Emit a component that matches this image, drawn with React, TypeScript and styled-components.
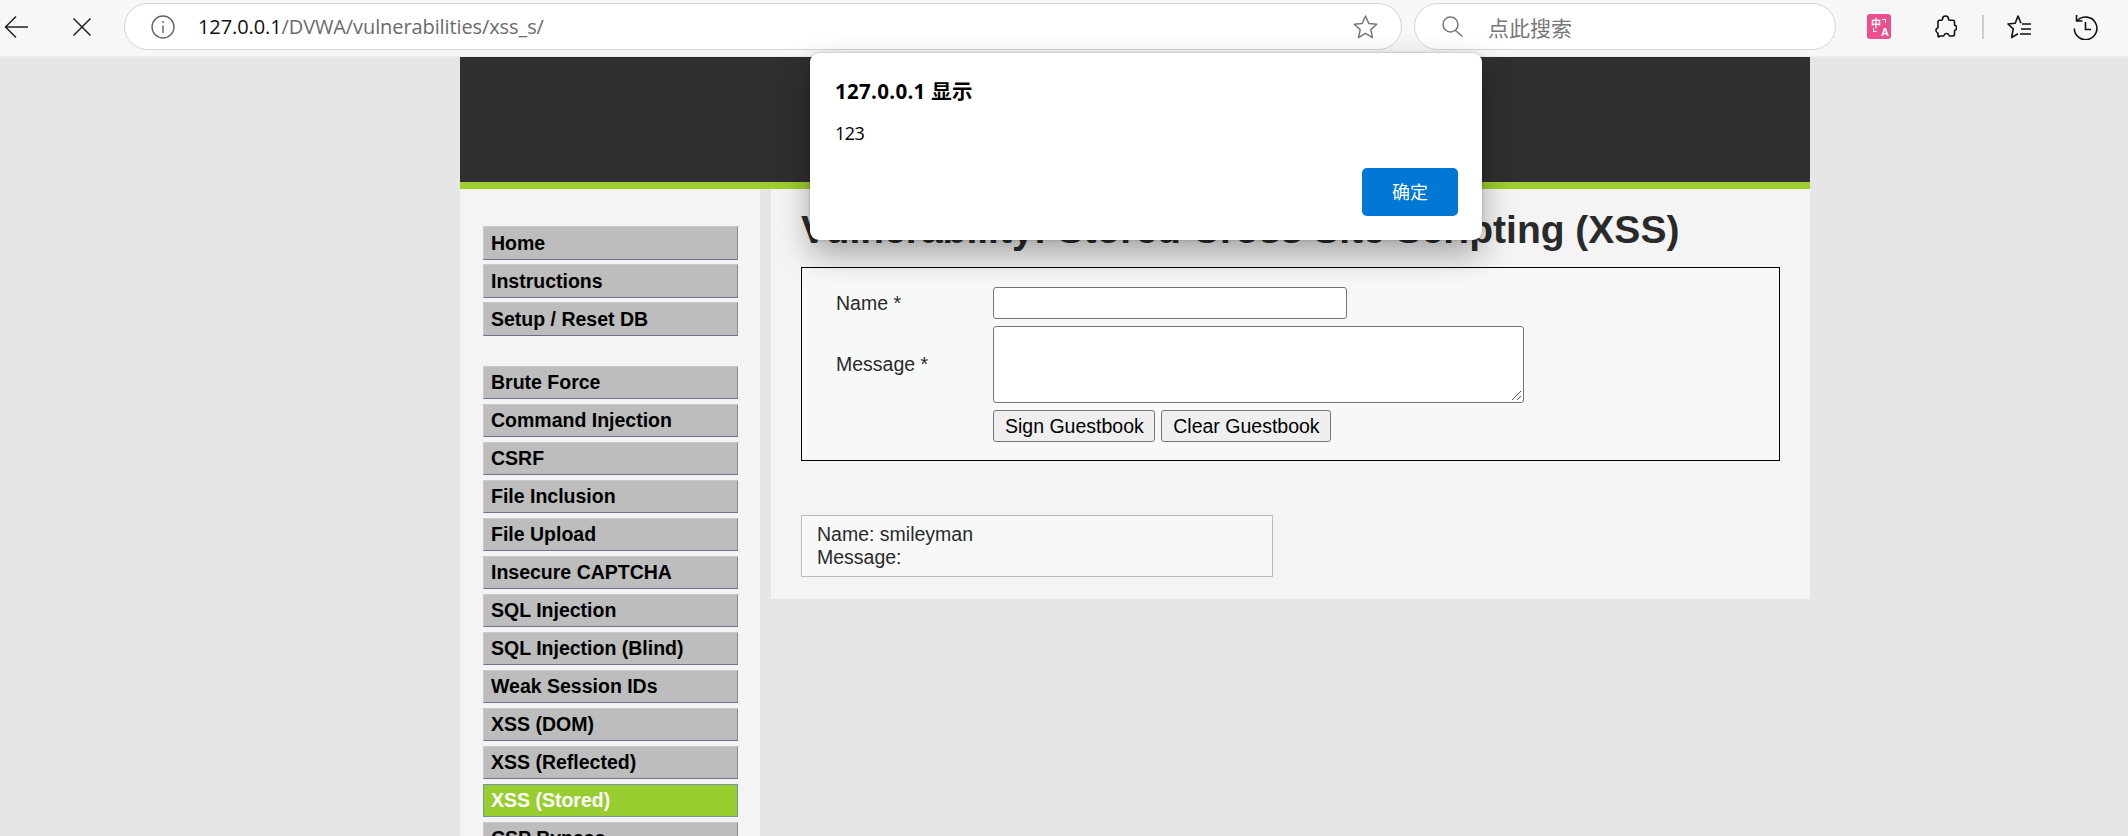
import React from "react";
import styled, { createGlobalStyle } from "styled-components";

const Global = createGlobalStyle`
    html, body {
        margin: 0;
        padding: 0;
        height: 836px;
        overflow: hidden;
        background: #e6e6e6;
        font-family: "Liberation Sans", Arial, sans-serif;
    }
`;

const Toolbar = styled.div`
    height: 57px;
    background: #f7f7f7;
    border-bottom: 1px solid #eeeeee;
    box-sizing: border-box;
    display: flex;
    align-items: center;
    padding: 0 0 3px 4px;
`;

const ToolIcon = styled.div<{ $ml?: number }>`
    margin-left: ${(p) => p.$ml || 0}px;
    display: flex;
    flex: none;
`;

const AddressBar = styled.div`
    margin-left: 33px;
    width: 1278px;
    height: 47px;
    box-sizing: border-box;
    background: #fff;
    border: 1.5px solid #d4d4d4;
    border-radius: 24px;
    display: flex;
    align-items: center;
    padding: 0 23px 0 26px;
    flex: none;
`;

const Url = styled.div`
    margin-left: 23px;
    flex: 1;
    font-size: 20px;
    font-family: "Open Sans", "Liberation Sans", sans-serif;
    letter-spacing: -0.1px;
    color: #6b6b6b;
    b {
        font-weight: 400;
        color: #111;
    }
`;

const SearchBar = styled.div`
    margin-left: 12px;
    width: 422px;
    height: 47px;
    box-sizing: border-box;
    background: #fff;
    border: 1.5px solid #d4d4d4;
    border-radius: 24px;
    display: flex;
    align-items: center;
    padding-left: 27px;
    flex: none;
    color: #777;
    font-size: 21px;
    font-family: "Noto Sans CJK SC", sans-serif;
`;

const SearchText = styled.span`
    margin-left: 24px;
`;

const ToolDivider = styled.div`
    width: 2px;
    height: 24px;
    background: #cfcfcf;
    flex: none;
`;

const TranslateBadge = styled.div`
    margin-left: 31px;
    flex: none;
    width: 24px;
    height: 25px;
    box-sizing: border-box;
    padding: 4px 3px 3px 4px;
    border-radius: 3px;
    background: #ec4f8b;
    color: #fff;
    display: grid;
    grid-template-columns: 10px 7px;
    grid-template-rows: 10px 8px;
    font-weight: 700;
`;

const BadgeHan = styled.span`
    font-size: 10px;
    line-height: 10px;
    font-family: "Noto Sans CJK SC", sans-serif;
`;

const BadgeLatin = styled.span`
    font-size: 11px;
    line-height: 9px;
    font-family: "Liberation Sans", sans-serif;
`;

const BadgeCorner = styled.span<{ $flip?: boolean }>`
    width: 4px;
    height: 4px;
    box-sizing: border-box;
    border: 1.5px solid #fff;
    ${(p) =>
        p.$flip
            ? "border-top: 0; border-right: 0; margin-left: 2px;"
            : "border-bottom: 0; border-left: 0; margin-left: 1px; margin-top: 1px;"}
`;

const Page = styled.div`
    width: 1350px;
    margin-left: 460px;
`;

const Header = styled.div`
    height: 132px;
    box-sizing: border-box;
    background: #2f2f2f;
    border-bottom: 7px solid #9fcd2f;
`;

const Body = styled.div`
    display: flex;
    align-items: flex-start;
`;

const Sidebar = styled.div`
    width: 300px;
    height: 660px;
    flex: none;
    background: #f4f4f4;
    padding: 37px 22px 0 23px;
    box-sizing: border-box;
`;

const NavGroup = styled.div<{ $compact?: boolean }>`
    display: flex;
    flex-direction: column;
    gap: ${(p) => (p.$compact ? 5 : 4)}px;
    margin-bottom: 30px;
`;

const NavItem = styled.div<{ $active?: boolean; $compact?: boolean }>`
    height: ${(p) => (p.$compact ? 33 : 34)}px;
    box-sizing: border-box;
    flex: none;
    padding-left: 7px;
    display: flex;
    align-items: center;
    font-size: 19.5px;
    font-weight: 700;
    color: ${(p) => (p.$active ? "#fff" : "#000")};
    background: ${(p) => (p.$active ? "#97cd2f" : "#bdbdbd")};
    border: 1px solid #c8c8c8;
    border-bottom-color: #6c7488;
    border-right-color: #858a96;
    ${(p) => (p.$active ? "border-color: #7a90aa;" : "")}
`;

const Main = styled.div`
    margin-left: 11px;
    flex: 1;
    height: 410px;
    box-sizing: border-box;
    background: #f4f4f4;
    padding: 0 30px 0 30px;
`;

const Title = styled.h1`
    margin: 0;
    height: 78px;
    padding-top: 18px;
    box-sizing: border-box;
    font-size: 39px;
    line-height: 46px;
    font-weight: 700;
    color: #2a2a2a;
    white-space: nowrap;
`;

const FormBox = styled.div`
    height: 194px;
    box-sizing: border-box;
    border: 1px solid #000;
    background: #f7f9f9;
    padding: 19px 0 0 34px;
    display: grid;
    grid-template-columns: 157px auto 1fr;
    grid-template-rows: 32px 77px 32px;
    row-gap: 7px;
    color: #2a2a2a;
    font-size: 19.5px;
`;

const Label = styled.div`
    display: flex;
    align-items: center;
    grid-column: 1;
`;

const TextInput = styled.div`
    grid-column: 2;
    width: 354px;
    height: 32px;
    box-sizing: border-box;
    background: #fff;
    border: 1px solid #767676;
    border-radius: 3px;
`;

const TextArea = styled.div`
    grid-column: 2;
    width: 531px;
    height: 77px;
    box-sizing: border-box;
    background: #fff;
    border: 1px solid #767676;
    border-radius: 3px;
    position: relative;
`;

const Grip = styled.svg`
    position: absolute;
    right: 1px;
    bottom: 1px;
`;

const Buttons = styled.div`
    grid-column: 2;
    display: flex;
    gap: 6px;
`;

const Btn = styled.div`
    height: 32px;
    box-sizing: border-box;
    padding: 0 10.5px 0 11px;
    display: flex;
    align-items: center;
    background: #efefef;
    border: 1px solid #767676;
    border-radius: 3px;
    color: #000;
    font-size: 19.5px;
    white-space: nowrap;
`;

const Entry = styled.div`
    margin-top: 54px;
    width: 472px;
    height: 62px;
    box-sizing: border-box;
    background: #f7f9f9;
    border: 1px solid #bbb;
    padding: 7px 15px;
    font-size: 19.5px;
    line-height: 22.5px;
    color: #2a2a2a;
`;

const Dialog = styled.div`
    position: absolute;
    left: 810px;
    top: 53px;
    width: 672px;
    height: 187px;
    box-sizing: border-box;
    background: #fff;
    border-radius: 9px;
    box-shadow: 0 14px 32px rgba(0, 0, 0, 0.33), 0 0 3px rgba(0, 0, 0, 0.25);
    padding: 24px 24px 24px 25px;
    display: flex;
    flex-direction: column;
    color: #000;
    font-family: "Open Sans", "Noto Sans CJK SC", sans-serif;
`;

const DialogTitle = styled.div`
    font-size: 20.5px;
    font-weight: 700;
    line-height: 28px;
    letter-spacing: 0.3px;
`;

const DialogText = styled.div`
    margin-top: 14px;
    font-size: 18px;
    line-height: 28px;
    letter-spacing: -0.6px;
`;

const DialogActions = styled.div`
    margin-top: auto;
    display: flex;
    justify-content: flex-end;
`;

const OkButton = styled.div`
    width: 96px;
    height: 48px;
    box-sizing: border-box;
    padding-bottom: 2px;
    background: #0078d4;
    border-radius: 5px;
    color: #fff;
    font-size: 18px;
    display: flex;
    align-items: center;
    justify-content: center;
`;

const topLinks = ["Home", "Instructions", "Setup / Reset DB"];
const vulnLinks = [
    "Brute Force",
    "Command Injection",
    "CSRF",
    "File Inclusion",
    "File Upload",
    "Insecure CAPTCHA",
    "SQL Injection",
    "SQL Injection (Blind)",
    "Weak Session IDs",
    "XSS (DOM)",
    "XSS (Reflected)",
    "XSS (Stored)",
    "CSP Bypass",
];

const App = () => {
    return (
        <>
            <Global />
            <Toolbar>
                <ToolIcon>
                    <svg width="24" height="24" viewBox="0 0 24 24" fill="none" stroke="#222" strokeWidth="1.5">
                        <path d="M24 12H1M12 1.500 1.500 12 12 22.500" />
                    </svg>
                </ToolIcon>
                <ToolIcon $ml={45}>
                    <svg width="18" height="18" viewBox="0 0 18 18" fill="none" stroke="#222" strokeWidth="1.5">
                        <path d="M.5.500l17 17M17.500.500l-17 17" />
                    </svg>
                </ToolIcon>
                <AddressBar>
                    <svg width="24" height="24" viewBox="0 0 24 24" fill="none" stroke="#666" strokeWidth="1.4">
                        <circle cx="12" cy="12" r="11" />
                        <path d="M12 10.500v7.500M12 6v2" />
                    </svg>
                    <Url>
                        <b>127.0.0.1</b>/DVWA/vulnerabilities/xss_s/
                    </Url>
                    <svg width="25" height="24" viewBox="0 0 25 24" fill="none" stroke="#777" strokeWidth="1.5" strokeLinejoin="round">
                        <path d="M12.500 1l3.300 7.500 8 .8-6 5.300 1.700 8-7-4.200-7 4.200 1.700-8-6-5.300 8-.8z" />
                    </svg>
                </AddressBar>
                <SearchBar>
                    <svg width="22" height="21" viewBox="0 0 22 21" fill="none" stroke="#777" strokeWidth="1.5">
                        <circle cx="8.500" cy="8.500" r="7.500" />
                        <path d="M13.500 14.500l7 6" />
                    </svg>
                    <SearchText>点此搜索</SearchText>
                </SearchBar>
                <TranslateBadge>
                    <BadgeHan>中</BadgeHan>
                    <BadgeCorner />
                    <BadgeCorner $flip />
                    <BadgeLatin>A</BadgeLatin>
                </TranslateBadge>
                <ToolIcon $ml={44}>
                    <svg width="22" height="24" viewBox="0 0 22 24" fill="none" stroke="#111" strokeWidth="1.6" strokeLinejoin="round">
                        <path d="M7.500 4.200C7.500 1.800 9 1 10.500 1s3 .8 3 3.200c0 .6.400 1 1 1h3.300c1 0 1.700.7 1.700 1.700v2.600c0 .6.500.9 1 1 .7.300 1 1.200 1 2.200s-.3 2-1 2.300c-.5.100-1 .4-1 1v3.300c0 1-.7 1.700-1.700 1.700h-3c-.6 0-.8-.5-1-1-.3-.9-1.300-1.500-2.300-1.500s-2 .6-2.300 1.500c-.2.500-.4 1-1 1H4.700C3.700 22.500 3 21.800 3 20.800v-2.300c0-.6-.5-.9-1-1.100C1.300 17 1 16.200 1 15.300s.3-1.700 1-2c.5-.2 1-.5 1-1.100V6.900c0-1 .7-1.700 1.700-1.700h1.800c.6 0 1-.4 1-1z" />
                    </svg>
                </ToolIcon>
                <ToolIcon $ml={25}>
                    <ToolDivider />
                </ToolIcon>
                <ToolIcon $ml={23}>
                    <svg width="24" height="24" viewBox="0 0 24 24" fill="none" stroke="#111" strokeWidth="1.6" strokeLinejoin="round">
                        <path d="M14 8.200 11 1 8.200 8.200 1 9l5.300 4.800L4.600 22.500l6.400-3.700" />
                        <path d="M15 9h9M14 14h10M13 19h11" />
                    </svg>
                </ToolIcon>
                <ToolIcon $ml={42}>
                    <svg width="25" height="26" viewBox="0 0 25 26" fill="none" stroke="#111" strokeWidth="1.6">
                        <path d="M4.500 6.500A11.300 11.300 0 1 1 1.300 14.500M3.500 1v6h6M12.500 8v7.500h5.500" />
                    </svg>
                </ToolIcon>
            </Toolbar>
            <Page>
                <Header />
                <Body>
                    <Sidebar>
                        <NavGroup>
                            {topLinks.map((l) => (
                                <NavItem key={l}>{l}</NavItem>
                            ))}
                        </NavGroup>
                        <NavGroup $compact>
                            {vulnLinks.map((l) => (
                                <NavItem key={l} $compact $active={l === "XSS (Stored)"}>
                                    {l}
                                </NavItem>
                            ))}
                        </NavGroup>
                    </Sidebar>
                    <Main>
                        <Title>Vulnerability: Stored Cross Site Scripting (XSS)</Title>
                        <FormBox>
                            <Label>Name *</Label>
                            <TextInput />
                            <Label>Message *</Label>
                            <TextArea>
                                <Grip width="12" height="12" viewBox="0 0 12 12" stroke="#555" strokeWidth="1">
                                    <path d="M2 11l9-9M7 11l4-4" />
                                </Grip>
                            </TextArea>
                            <Buttons>
                                <Btn>Sign Guestbook</Btn>
                                <Btn>Clear Guestbook</Btn>
                            </Buttons>
                        </FormBox>
                        <Entry>
                            Name: smileyman
                            <br />
                            Message:
                        </Entry>
                    </Main>
                </Body>
            </Page>
            <Dialog>
                <DialogTitle>127.0.0.1 显示</DialogTitle>
                <DialogText>123</DialogText>
                <DialogActions>
                    <OkButton>确定</OkButton>
                </DialogActions>
            </Dialog>
        </>
    );
};

export default App;
